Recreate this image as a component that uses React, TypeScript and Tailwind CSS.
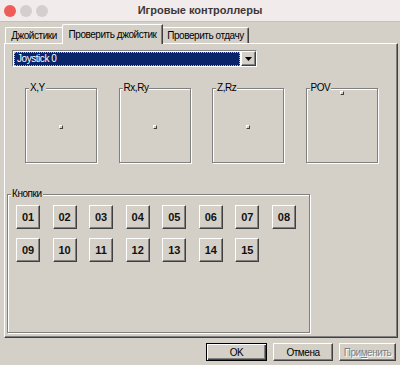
import React from "react";

const raised =
  "border-t border-l border-t-white border-l-white border-r border-b border-r-[#404040] border-b-[#404040] shadow-[inset_-1px_-1px_0_#808080]";

function Dot() {
  return (
    <div className="w-[4px] h-[4px] bg-[#d4d0c8] border-t border-l border-t-white border-l-white border-r border-b border-r-[#404040] border-b-[#404040]" />
  );
}

function AxisBox({ label, top }: { label: string; top?: boolean }) {
  return (
    <div className="relative w-[72px] h-[75px] border border-[#808080] shadow-[inset_1px_1px_0_#fff,1px_1px_0_#fff] flex justify-center">
      <span className="absolute left-[3px] top-[-7px] bg-[#d4d0c8] px-[1px] leading-[12px] whitespace-nowrap">
        {label}
      </span>
      {top ? (
        <div className="mt-[2px]">
          <Dot />
        </div>
      ) : (
        <div className="self-center mt-[2px]">
          <Dot />
        </div>
      )}
    </div>
  );
}

function NumBtn({ n }: { n: string }) {
  return (
    <div
      className={`w-[24px] h-[24px] bg-[#d4d0c8] ${raised} flex items-center justify-center font-bold text-[11px] tracking-normal text-[#111]`}
    >
      {n}
    </div>
  );
}

export default function App() {
  const nums = ["01", "02", "03", "04", "05", "06", "07", "08", "09", "10", "11", "12", "13", "14", "15"];
  return (
    <div className="w-[400px] h-[365px] bg-[#d4d0c8] flex flex-col overflow-hidden font-['Liberation_Sans',Arial,sans-serif] text-[10px] tracking-[-0.45px] text-black whitespace-nowrap">
      {/* title bar */}
      <div className="h-[22px] shrink-0 bg-[#f2ebeb] border-b border-[#c4bebe] grid grid-cols-[1fr_auto_1fr] items-center">
        <div className="flex gap-[4px] pl-[4px]">
          <div className="w-[12px] h-[12px] rounded-full bg-[#ee5d57]" />
          <div className="w-[12px] h-[12px] rounded-full bg-[#d3cfcf]" />
          <div className="w-[12px] h-[12px] rounded-full bg-[#d3cfcf]" />
        </div>
        <div className="font-bold text-[11px] tracking-normal text-[#3c3838] leading-none">Игровые контроллеры</div>
        <div />
      </div>

      {/* tabs */}
      <div className="flex items-end h-[21px] pl-[5px] shrink-0">
        <div className="w-[57px] h-[16px] border-t border-l border-t-white border-l-white rounded-tl-[2px] flex items-center justify-center">
          Джойстики
        </div>
        <div className="relative z-10 -mb-px w-[101px] h-[20px] bg-[#d4d0c8] border-t border-l border-r border-t-white border-l-white border-r-[#404040] shadow-[inset_-1px_0_0_#808080] rounded-tl-[2px] flex items-center justify-center pb-[1px]">
          Проверить джойстик
        </div>
        <div className="w-[86px] h-[16px] border-t border-r border-t-white border-r-[#404040] shadow-[inset_-1px_0_0_#808080] rounded-tr-[2px] flex items-center justify-center">
          Проверить отдачу
        </div>
      </div>

      {/* panel */}
      <div className="ml-[4px] w-[394px] h-[295px] shrink-0 border-t border-l border-t-white border-l-white border-r border-b border-r-[#404040] border-b-[#404040] shadow-[inset_-1px_-1px_0_#808080] flex flex-col">
        {/* combo */}
        <div className="ml-[7px] mt-[6px] w-[245px] h-[17px] flex border-t border-l border-t-[#808080] border-l-[#808080] border-r border-b border-r-white border-b-white shadow-[inset_1px_1px_0_#404040]">
          <div className="flex-1 bg-white pt-[1px] pl-[1px] pr-[1px] flex">
            <div className="flex-1 bg-[#0a246a] border border-dotted border-[#c9b98a] text-white leading-[12px] pl-[2px]">
              Joystick 0
            </div>
          </div>
          <div className={`w-[15px] h-[15px] bg-[#d4d0c8] ${raised} flex items-center justify-center`}>
            <svg width="7" height="4" viewBox="0 0 7 4">
              <path d="M0 0H7L3.5 4Z" fill="#000" />
            </svg>
          </div>
        </div>

        {/* axes */}
        <div className="mt-[21px] ml-[20px] flex gap-[21.5px]">
          <AxisBox label="X,Y" />
          <AxisBox label="Rx,Ry" />
          <AxisBox label="Z,Rz" />
          <AxisBox label="POV" top />
        </div>

        {/* buttons groupbox */}
        <div className="relative mt-[31px] ml-[2px] w-[303px] h-[139px] border border-[#808080] shadow-[inset_1px_1px_0_#fff,1px_1px_0_#fff] pl-[8px] pt-[10px]">
          <span className="absolute left-[3px] top-[-7px] bg-[#d4d0c8] px-[1px] leading-[12px]">
            Кнопки
          </span>
          <div className="grid grid-cols-[repeat(8,24px)] gap-x-[12.57px] gap-y-[9px]">
            {nums.map((n) => (
              <NumBtn key={n} n={n} />
            ))}
          </div>
        </div>
      </div>

      {/* bottom buttons */}
      <div className="mt-[5px] flex justify-end gap-[6px] pr-[4px]">
        <div className="w-[61px] h-[18px] border border-black shadow-[inset_1px_1px_0_#fff,inset_-1px_-1px_0_#404040,inset_-2px_-2px_0_#808080] flex items-center justify-center">
          OK
        </div>
        <div className={`w-[60px] h-[18px] ${raised} flex items-center justify-center`}>
          Отмена
        </div>
        <div className={`w-[57px] h-[18px] ${raised} flex items-center justify-center text-[#808080] [text-shadow:1px_1px_0_#fff]`}>
          При<span className="underline">м</span>енить
        </div>
      </div>
    </div>
  );
}
